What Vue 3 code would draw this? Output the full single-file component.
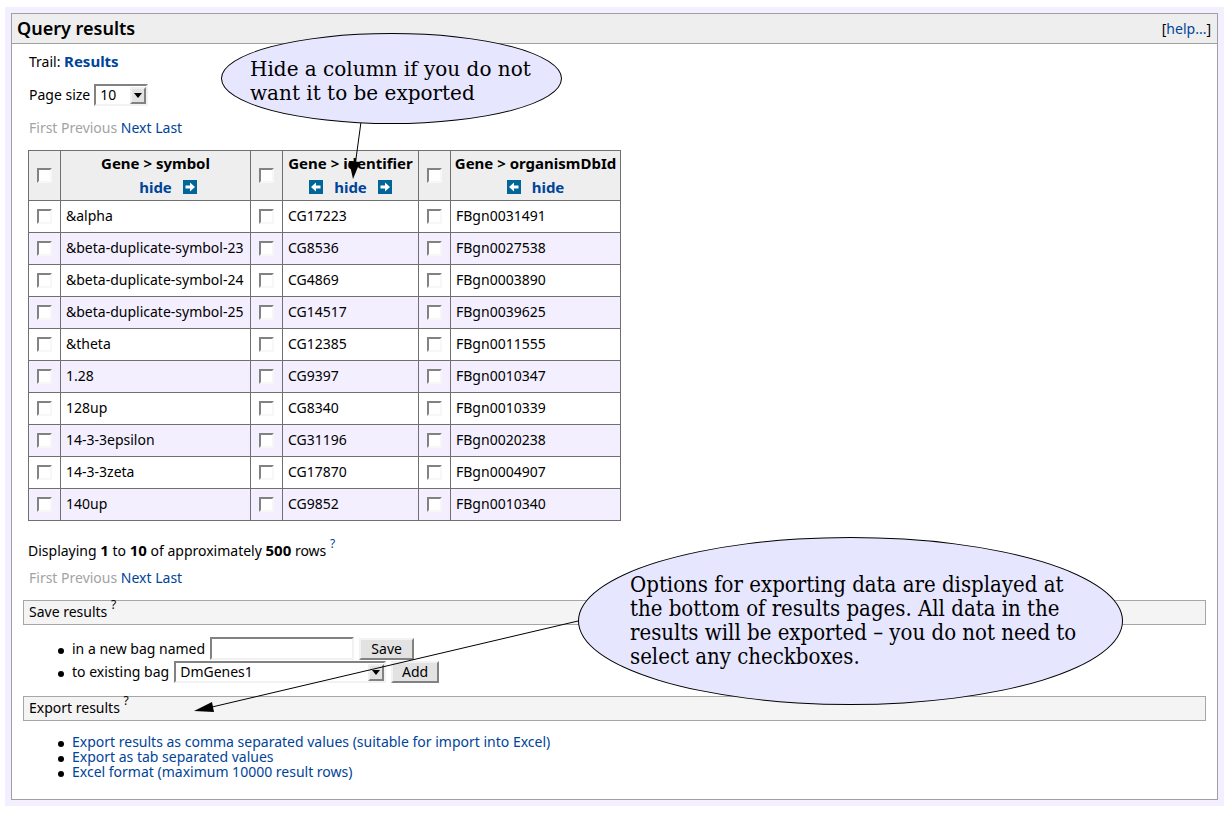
<script setup>
import { ref } from 'vue'

const columns = [
  { key: 'symbol', title: 'Gene > symbol', left: false, spacer: true, right: true },
  { key: 'identifier', title: 'Gene > identifier', left: true, right: true },
  { key: 'organism', title: 'Gene > organismDbId', left: true, right: false },
]

const rows = [
  ['&alpha', 'CG17223', 'FBgn0031491'],
  ['&beta-duplicate-symbol-23', 'CG8536', 'FBgn0027538'],
  ['&beta-duplicate-symbol-24', 'CG4869', 'FBgn0003890'],
  ['&beta-duplicate-symbol-25', 'CG14517', 'FBgn0039625'],
  ['&theta', 'CG12385', 'FBgn0011555'],
  ['1.28', 'CG9397', 'FBgn0010347'],
  ['128up', 'CG8340', 'FBgn0010339'],
  ['14-3-3epsilon', 'CG31196', 'FBgn0020238'],
  ['14-3-3zeta', 'CG17870', 'FBgn0004907'],
  ['140up', 'CG9852', 'FBgn0010340'],
]

const exportsList = [
  'Export results as comma separated values (suitable for import into Excel)',
  'Export as tab separated values',
  'Excel format (maximum 10000 result rows)',
]

const pageSize = ref('10')
const bagName = ref('')
const bag = ref('DmGenes1')
</script>

<template>
  <div class="page">
    <main class="panel">
      <header class="head">
        <h1>Query results</h1>
        <span>[<a href="#">help...</a>]</span>
      </header>

      <div class="body">
        <div class="inset">
          <p class="line">Trail: <a href="#"><b>Results</b></a></p>
          <div class="size">
            <label for="page-size">Page size</label>
            <span class="pick small">
              <select id="page-size" v-model="pageSize">
                <option>10</option>
                <option>25</option>
                <option>50</option>
              </select>
              <span class="drop"><svg width="8" height="5" viewBox="0 0 8 5"><path d="M0 0h8L4 5z" /></svg></span>
            </span>
          </div>
          <nav class="line pager"><span>First</span> <span>Previous</span> <a href="#">Next</a> <a href="#">Last</a></nav>

          <table>
            <colgroup>
              <col class="c-box"><col class="c-symbol">
              <col class="c-box"><col class="c-identifier">
              <col class="c-box"><col class="c-organism">
            </colgroup>
            <thead>
              <tr>
                <template v-for="c in columns" :key="c.key">
                  <th class="tick"><input type="checkbox" :aria-label="'Select column ' + c.title"></th>
                  <th class="name">
                    <div class="title">{{ c.title }}</div>
                    <div class="tools">
                      <span v-if="c.spacer" class="move"></span>
                      <a v-if="c.left" class="move" href="#" aria-label="Move left">
                        <svg width="14" height="14" viewBox="0 0 14 14"><rect width="14" height="14" fill="#006699" /><path d="M2 7L7 2.5V5.5H11.5V8.5H7V11.5z" fill="#fff" /></svg>
                      </a>
                      <a href="#">hide</a>
                      <a v-if="c.right" class="move" href="#" aria-label="Move right">
                        <svg width="14" height="14" viewBox="0 0 14 14"><rect width="14" height="14" fill="#006699" /><path d="M12 7L7 2.5V5.5H2.5V8.5H7V11.5z" fill="#fff" /></svg>
                      </a>
                    </div>
                  </th>
                </template>
              </tr>
            </thead>
            <tbody>
              <tr v-for="row in rows" :key="row[0]">
                <template v-for="cell in row" :key="cell">
                  <td class="tick"><input type="checkbox" :aria-label="'Select ' + cell"></td>
                  <td>{{ cell }}</td>
                </template>
              </tr>
            </tbody>
          </table>

          <p class="line count">Displaying <b>1</b> to <b>10</b> of approximately <b>500</b> rows <a class="q" href="#">?</a></p>
          <nav class="line pager low"><span>First</span> <span>Previous</span> <a href="#">Next</a> <a href="#">Last</a></nav>
        </div>

        <h2>Save results <span class="q">?</span></h2>
        <ul class="save">
          <li>
            <label for="bag-name">in a new bag named</label>
            <input id="bag-name" v-model="bagName" type="text">
            <button type="button">Save</button>
          </li>
          <li>
            <label for="bag">to existing bag</label>
            <span class="pick wide">
              <select id="bag" v-model="bag"><option>DmGenes1</option></select>
              <span class="drop"><svg width="8" height="5" viewBox="0 0 8 5"><path d="M0 0h8L4 5z" /></svg></span>
            </span>
            <button class="add" type="button">Add</button>
          </li>
        </ul>

        <h2>Export results <span class="q">?</span></h2>
        <ul class="exports">
          <li v-for="e in exportsList" :key="e"><a href="#">{{ e }}</a></li>
        </ul>
      </div>
    </main>

    <svg class="arrow one" width="20" height="62" viewBox="0 0 20 62">
      <path d="M15 0L9 44" stroke="#000" fill="none" /><path d="M3 39L14 40L7 57z" />
    </svg>
    <svg class="arrow two" width="390" height="100" viewBox="0 0 390 100">
      <path d="M384 6L18 92" stroke="#000" fill="none" /><path d="M0 96L18 87L20 97z" />
    </svg>
    <aside class="note first">Hide a column if you do not<br>want it to be exported</aside>
    <aside class="note second">Options for exporting data are displayed at<br>the bottom of results pages. All data in the<br>results will be exported – you do not need to<br>select any checkboxes.</aside>
  </div>
</template>

<style>
body { background: #fff; }
</style>

<style scoped>
.page {
  position: relative;
  margin: 7px 8px 7px 5px;
  padding: 6px;
  background: #f3efff;
  font-family: "Noto Sans", "DejaVu Sans", sans-serif;
  font-size: 14px;
  line-height: 16px;
  color: #000;
}
a { color: #00449a; text-decoration: none; }
b { font-size: 15px; line-height: 16px; }
p, h1, h2, ul { margin: 0; padding: 0; }
.panel { border: 1px solid #a0a0a0; background: #fff; }
.head {
  display: flex;
  align-items: center;
  justify-content: space-between;
  height: 29px;
  padding: 0 6px 0 5px;
  background: #eee;
  border-bottom: 1px solid #a0a0a0;
}
h1 { font-size: 18px; line-height: 24px; font-weight: 600; padding-bottom: 2px; }
.body { padding: 9px 11px 20px; }
.inset { padding: 0 6px 0 5px; }
.line { height: 16px; padding-left: 1px; white-space: nowrap; }
.size { display: flex; align-items: center; gap: 4px; height: 22px; margin-top: 15px; padding-left: 1px; }
.pager { margin-top: 14px; }
.pager span { color: #a3a3a3; }
.pager.low { margin: 12px 0 14px; }
.count { margin-top: 21px; padding-left: 0; }

.pick { position: relative; display: inline-flex; height: 22px; }
.small { width: 54px; }
.wide { width: 212px; }
.pick select {
  appearance: none;
  width: 100%;
  height: 22px;
  padding: 0 20px 0 4px;
  border: 2px solid;
  border-color: #828282 #f2f2f2 #f2f2f2 #828282;
  border-radius: 0;
  background: #fff;
  color: #000;
  font: inherit;
}
.drop {
  position: absolute;
  right: 2px;
  top: 3px;
  display: flex;
  align-items: center;
  justify-content: center;
  box-sizing: border-box;
  width: 16px;
  height: 17px;
  border: 2px solid;
  border-color: #f0f0f0 #828282 #828282 #f0f0f0;
  background: #e2e2e2;
  pointer-events: none;
}

table { table-layout: fixed; width: 592px; margin-top: 14px; border-collapse: collapse; }
.c-box { width: 32px; }
.c-symbol { width: 190px; }
.c-identifier { width: 136px; }
.c-organism { width: 170px; }
th, td { box-sizing: border-box; border: 1px solid #707070; padding: 0 0 0 5px; white-space: nowrap; text-align: left; }
td { height: 32px; }
td:not(.tick) { padding-bottom: 2px; }
th { height: 50px; padding: 0; background: #eee; text-align: center; font-size: 15px; font-weight: 700; }
.name { vertical-align: top; }
tbody tr:nth-child(even) { background: #f3efff; }
.tick { padding: 0; text-align: center; }
.tick input {
  appearance: none;
  display: block;
  width: 15px;
  height: 15px;
  margin: 0 auto;
  border: 2px solid;
  border-color: #828282 #f7f7f7 #f7f7f7 #828282;
  background: #fff;
}
.title { line-height: 24px; }
.tools { display: flex; align-items: center; justify-content: center; gap: 11px; height: 24px; }
.move { display: flex; width: 14px; }

.q { font-size: 12px; line-height: 0; position: relative; top: -8px; }
h2 {
  box-sizing: border-box;
  height: 25px;
  padding-left: 5px;
  border: 1px solid #a6a6a6;
  background: #f4f4f4;
  font-size: 14px;
  line-height: 22px;
  font-weight: 400;
}
ul { list-style: none; padding-left: 49px; }
li { position: relative; }
li::before {
  content: "";
  position: absolute;
  left: -14px;
  top: 50%;
  width: 6px;
  height: 6px;
  margin-top: -1px;
  border-radius: 50%;
  background: #000;
}
.save { margin: 12px 0 13px; }
.save li { display: flex; align-items: center; gap: 5px; height: 23px; }
.save input {
  box-sizing: border-box;
  width: 144px;
  height: 23px;
  border: 2px solid;
  border-color: #828282 #f2f2f2 #f2f2f2 #828282;
  background: #fff;
  font: inherit;
}
button {
  width: 55px;
  height: 22px;
  padding: 0;
  border: 2px solid;
  border-color: #f2f2f2 #828282 #828282 #f2f2f2;
  border-radius: 0;
  background: #e2e2e2;
  color: #000;
  font: inherit;
  line-height: 16px;
}
.add { width: 48px; }
.exports { margin-top: 13px; }
.exports li { height: 15px; line-height: 15px; }

.note {
  position: absolute;
  box-sizing: border-box;
  border: 1px solid #000;
  border-radius: 50%;
  background: #e6e6ff;
  font-size: 20px;
  line-height: 24px;
  white-space: nowrap;
}
.first {
  left: 216px;
  top: 26px;
  width: 341px;
  height: 91px;
  padding: 23px 0 0 28px;
  font-family: "DejaVu Serif", serif;
}
.second {
  left: 573px;
  top: 530px;
  width: 545px;
  height: 168px;
  padding: 35px 0 0 51px;
  font-family: "DejaVu Serif Condensed", "DejaVu Serif", serif;
  font-size: 22px;
}
.arrow { position: absolute; pointer-events: none; }
.arrow.one { left: 341px; top: 115px; }
.arrow.two { left: 189px; top: 608px; }
</style>
